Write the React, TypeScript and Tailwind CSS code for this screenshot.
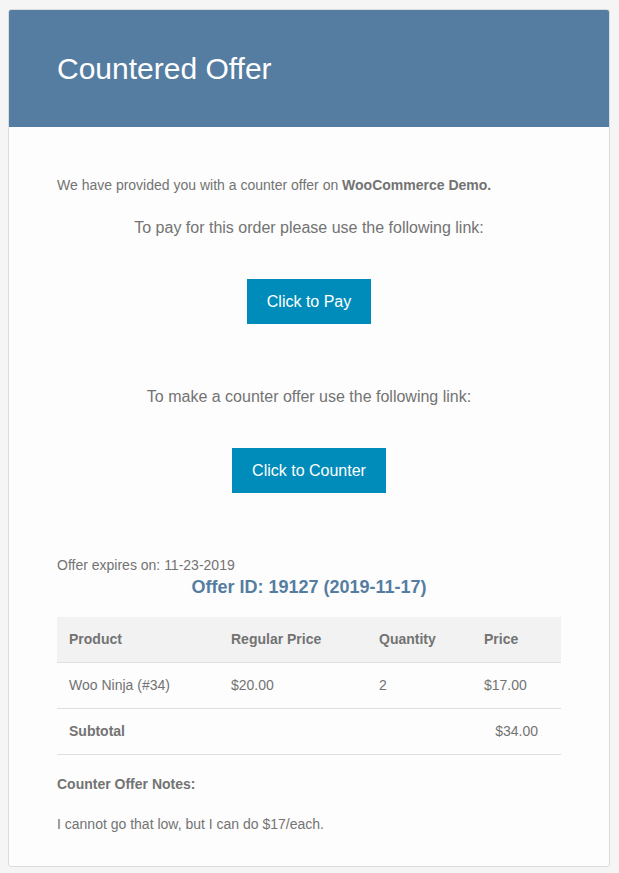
import React from "react";

const font = { fontFamily: '"Liberation Sans", Arial, Helvetica, sans-serif' };

const rows = [
  { product: "Woo Ninja (#34)", regular: "$20.00", qty: "2", price: "$17.00" },
];

const App = () => {
  return (
    <div className="min-h-[873px] bg-[#f5f5f5] pt-[9px] pb-[7px] px-[8px] text-[#737373]" style={font}>
      <div className="w-[602px] bg-[#fdfdfd] border border-[#dcdcdc] rounded-[3px] overflow-hidden">
        <div className="bg-[#557da1] px-[48px] py-[36px]">
          <h1 className="text-[30px] leading-[45px] text-white font-normal">Countered Offer</h1>
        </div>

        <div className="px-[48px] pt-[48px] pb-[32px]">
          <p className="text-[14px] leading-[20px]">
            We have provided you with a counter offer on <strong>WooCommerce Demo.</strong>
          </p>

          <p className="mt-[21px] text-[16px] leading-[24px] text-center">
            To pay for this order please use the following link:
          </p>
          <div className="mt-[39px] flex justify-center">
            <a className="h-[45px] px-5 flex items-center bg-[#008cba] text-white text-[16px]">Click to Pay</a>
          </div>

          <p className="mt-[61px] text-[16px] leading-[24px] text-center">
            To make a counter offer use the following link:
          </p>
          <div className="mt-[39px] flex justify-center">
            <a className="h-[45px] px-5 flex items-center bg-[#008cba] text-white text-[16px]">Click to Counter</a>
          </div>

          <p className="mt-[62px] text-[14px] leading-[20px]">Offer expires on: 11-23-2019</p>
          <h2 className="mt-[1px] text-[18px] leading-[22px] font-bold text-center text-[#557da1]">
            Offer ID: 19127 (2019-11-17)
          </h2>

          <table className="mt-[19px] w-full table-fixed text-[14px] border-collapse">
            <colgroup>
              <col className="w-[162px]" />
              <col className="w-[148px]" />
              <col className="w-[105px]" />
              <col />
            </colgroup>
            <thead>
              <tr className="bg-[#f2f2f2] h-[45px] border-b border-[#dfdfdf]">
                <th className="text-left font-bold px-[12px]">Product</th>
                <th className="text-left font-bold px-[12px]">Regular Price</th>
                <th className="text-left font-bold px-[12px]">Quantity</th>
                <th className="text-left font-bold px-[12px]">Price</th>
              </tr>
            </thead>
            <tbody>
              {rows.map((r) => (
                <tr key={r.product} className="h-[46px] border-b border-[#dfdfdf]">
                  <td className="px-[12px]">{r.product}</td>
                  <td className="px-[12px]">{r.regular}</td>
                  <td className="px-[12px]">{r.qty}</td>
                  <td className="px-[12px]">{r.price}</td>
                </tr>
              ))}
              <tr className="h-[46px] border-b border-[#dfdfdf]">
                <td className="px-[12px] font-bold">Subtotal</td>
                <td colSpan={3} className="text-right pr-[23px]">$34.00</td>
              </tr>
            </tbody>
          </table>

          <p className="mt-[19px] text-[14px] leading-[20px] font-bold">Counter Offer Notes:</p>
          <p className="mt-[20px] text-[14px] leading-[20px]">I cannot go that low, but I can do $17/each.</p>
        </div>
      </div>
    </div>
  );
};

export default App;
